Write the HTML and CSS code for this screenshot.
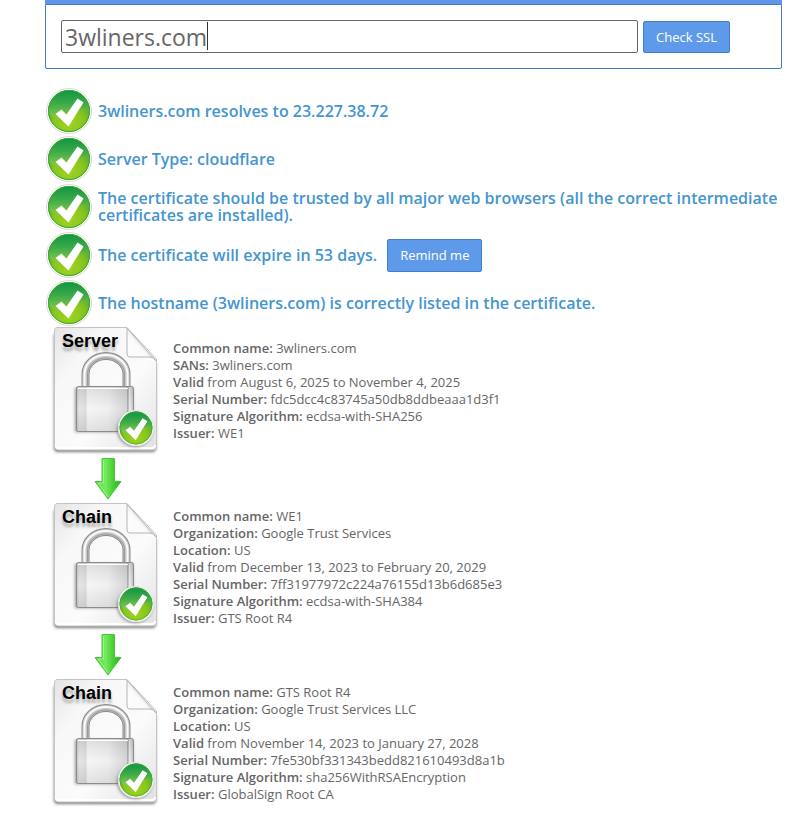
FILE: index.html
```html
<!DOCTYPE html>
<html lang="en">
<head>
    <meta charset="utf-8">
    <meta name="viewport" content="width=device-width, initial-scale=1">
    <title>SSL Checker</title>
    <link rel="stylesheet" href="styles.css">
</head>
<body>
    <!-- shared icons -->
    <svg class="sprite" width="0" height="0" aria-hidden="true">
        <defs>
            <linearGradient id="green-top" x1="0" y1="0" x2="0" y2="1">
                <stop offset="0" stop-color="#0f9444"/>
                <stop offset="0.5" stop-color="#3fab48"/>
                <stop offset="1" stop-color="#8cc94c"/>
            </linearGradient>
            <radialGradient id="green-glow" cx="0.5" cy="0.8" r="0.6">
                <stop offset="0" stop-color="#a0d420"/>
                <stop offset="0.6" stop-color="#86c61e"/>
                <stop offset="1" stop-color="#58ae2c"/>
            </radialGradient>
            <linearGradient id="paper" x1="0" y1="0" x2="1" y2="1">
                <stop offset="0" stop-color="#e4e4e4"/>
                <stop offset="0.25" stop-color="#f8f8f8"/>
                <stop offset="0.6" stop-color="#fbfbfb"/>
                <stop offset="1" stop-color="#e2e2e2"/>
            </linearGradient>
            <linearGradient id="fold" x1="0" y1="1" x2="0.6" y2="0.4">
                <stop offset="0" stop-color="#ffffff"/>
                <stop offset="0.7" stop-color="#fafafa"/>
                <stop offset="1" stop-color="#d0d0d0"/>
            </linearGradient>
            <linearGradient id="steel" x1="0" y1="0" x2="1" y2="0">
                <stop offset="0" stop-color="#bcbcbc"/>
                <stop offset="0.05" stop-color="#dedede"/>
                <stop offset="0.17" stop-color="#d6d6d6"/>
                <stop offset="0.19" stop-color="#f4f4f4"/>
                <stop offset="0.55" stop-color="#ececec"/>
                <stop offset="0.88" stop-color="#cccccc"/>
                <stop offset="0.9" stop-color="#8a8a8a"/>
                <stop offset="0.93" stop-color="#e8e8e8"/>
                <stop offset="1" stop-color="#b0b0b0"/>
            </linearGradient>
            <linearGradient id="shade" x1="0" y1="0" x2="0" y2="1">
                <stop offset="0" stop-color="#999999" stop-opacity="0.25"/>
                <stop offset="0.5" stop-color="#ffffff" stop-opacity="0.2"/>
                <stop offset="1" stop-color="#999999" stop-opacity="0.2"/>
            </linearGradient>
            <linearGradient id="arrow-fill" x1="0" y1="0" x2="1" y2="0">
                <stop offset="0.1" stop-color="#5fdc4c"/>
                <stop offset="0.4" stop-color="#74ea5e"/>
                <stop offset="0.9" stop-color="#2cbc1c"/>
            </linearGradient>
            <filter id="soft" x="-20%" y="-20%" width="140%" height="140%">
                <feGaussianBlur stdDeviation="1.5"/>
            </filter>
        </defs>
        <symbol id="check" viewBox="0 0 46 46">
            <circle cx="23" cy="23" r="22.5" fill="#fff" stroke="#dadada"/>
            <circle cx="23" cy="23" r="21" fill="url(#green-glow)"/>
            <path d="M2 23a21 21 0 0 1 42 0c-2-2-5-3-8-2-8 2-14 9-23 9-5 0-9-3-11-7z" fill="url(#green-top)"/>
            <circle cx="23" cy="23" r="20.5" fill="none" stroke="#3aa838"/>
            <path d="M9.500 26l6-4.500 5 5L31.500 10.500l6 4-15 24z" fill="#fff"/>
        </symbol>
        <symbol id="document" viewBox="0 0 112 128">
            <path d="M8 6h69l30 32v83a4 4 0 0 1-4 4H9a4 4 0 0 1-4-4V8z" fill="#444" opacity="0.7" filter="url(#soft)"/>
            <path d="M8 .5h70L107.500 32v87a4 4 0 0 1-4 4H9.500a4 4 0 0 1-4-4V3A3 3 0 0 1 8 .5z" fill="url(#paper)" stroke="#c4c4c4"/>
            <path d="M7 118q0 3 3 3h93q3 0 3-3" fill="none" stroke="#fff" stroke-width="2"/>
            <path d="M78 1v26q0 3 3 3h20q4 0 6 4z" fill="url(#fold)" stroke="#b4b4b4"/>
            <!-- padlock -->
            <path d="M26 61h58v44H26z" fill="#333" opacity="0.5" filter="url(#soft)"/>
            <path d="M36.500 60V47a20.500 18 0 0 1 41 0v13" fill="none" stroke="#8a8a8a" stroke-width="8"/>
            <path d="M36.500 60V47a20.500 18 0 0 1 41 0v13" fill="none" stroke="#c8c8c8" stroke-width="6"/>
            <path d="M35.500 60V47a21.500 19 0 0 1 43 0v13" fill="none" stroke="#fafafa" stroke-width="2"/>
            <path d="M38.500 60V47a18.500 16 0 0 1 37 0v13" fill="none" stroke="#9a9a9a"/>
            <rect x="27.500" y="59.500" width="57" height="45" rx="2" fill="url(#steel)" stroke="#8c8c8c"/>
            <rect x="28" y="60" width="56" height="44" rx="2" fill="url(#shade)"/>
            <path d="M29 61.500h50" stroke="#fff"/>
            <ellipse cx="86" cy="103" rx="18" ry="17" fill="#444" opacity="0.5" filter="url(#soft)"/>
            <circle cx="87" cy="101" r="18" fill="#fff"/>
            <use href="#check" x="69" y="83" width="36" height="36"/>
        </symbol>
        <symbol id="arrow" viewBox="0 0 28 42">
            <path d="M8 .5h12.500v23h6.500L14 41 1 23.500h7z" fill="url(#arrow-fill)" stroke="#4cc43a"/>
            <path d="M9.500 2v23H4l10 13.500" fill="none" stroke="#a4f890" opacity="0.8"/>
        </symbol>
    </svg>

    <main class="checker">
        <form class="panel" onsubmit="return false">
            <div class="field">
                <input class="host" type="text" name="hostname" value="3wliners.com" aria-label="Server Hostname">
                <span class="caret"></span>
            </div>
            <button class="btn" type="submit">Check SSL</button>
        </form>

        <ul class="results">
            <li><svg class="check"><use href="#check"/></svg><span>3wliners.com resolves to 23.227.38.72</span></li>
            <li><svg class="check"><use href="#check"/></svg><span>Server Type: cloudflare</span></li>
            <li><svg class="check"><use href="#check"/></svg><span>The certificate should be trusted by all major web browsers (all the correct intermediate certificates are installed).</span></li>
            <li><svg class="check"><use href="#check"/></svg><span>The certificate will expire in 53 days.</span><button class="btn remind" type="button">Remind me</button></li>
            <li><svg class="check"><use href="#check"/></svg><span>The hostname (3wliners.com) is correctly listed in the certificate.</span></li>
        </ul>

        <section class="cert">
            <div class="cert-icon">
                <svg><use href="#document"/></svg>
                <span class="cert-label">Server</span>
            </div>
            <p>
                <b>Common name:</b> 3wliners.com<br>
                <b>SANs:</b> 3wliners.com<br>
                <b>Valid</b> from August 6, 2025 to November 4, 2025<br>
                <b>Serial Number:</b> fdc5dcc4c83745a50db8ddbeaaa1d3f1<br>
                <b>Signature Algorithm:</b> ecdsa-with-SHA256<br>
                <b>Issuer:</b> WE1
            </p>
        </section>
        <div class="arrow"><svg><use href="#arrow"/></svg></div>
        <section class="cert">
            <div class="cert-icon">
                <svg><use href="#document"/></svg>
                <span class="cert-label">Chain</span>
            </div>
            <p>
                <b>Common name:</b> WE1<br>
                <b>Organization:</b> Google Trust Services<br>
                <b>Location:</b> US<br>
                <b>Valid</b> from December 13, 2023 to February 20, 2029<br>
                <b>Serial Number:</b> 7ff31977972c224a76155d13b6d685e3<br>
                <b>Signature Algorithm:</b> ecdsa-with-SHA384<br>
                <b>Issuer:</b> GTS Root R4
            </p>
        </section>
        <div class="arrow"><svg><use href="#arrow"/></svg></div>
        <section class="cert">
            <div class="cert-icon">
                <svg><use href="#document"/></svg>
                <span class="cert-label">Chain</span>
            </div>
            <p>
                <b>Common name:</b> GTS Root R4<br>
                <b>Organization:</b> Google Trust Services LLC<br>
                <b>Location:</b> US<br>
                <b>Valid</b> from November 14, 2023 to January 27, 2028<br>
                <b>Serial Number:</b> 7fe530bf331343bedd821610493d8a1b<br>
                <b>Signature Algorithm:</b> sha256WithRSAEncryption<br>
                <b>Issuer:</b> GlobalSign Root CA
            </p>
        </section>
    </main>
</body>
</html>
```

FILE: styles.css
```css
* { box-sizing: border-box; }
body { margin: 0; background-color: #fff; color: #666; font-family: "Open Sans", Arial, sans-serif; font-size: 13px; line-height: 17px; }
.sprite { position: absolute; }
.checker { margin: 0 10px 20px 45px; border-top: 4px solid #5f97e8; }
.panel { display: flex; align-items: flex-end; gap: 5px; padding: 15px 51px 15px 15px; border: 1px solid #3f7fcc; border-radius: 0 0 2px 2px; }
.field { position: relative; flex: 1; min-width: 0; }
.host { display: block; width: 100%; height: 33px; padding: 0 3px; border: 1px solid #666; border-radius: 2px; outline: none; color: #666; font-family: inherit; font-size: 23px; }
.caret { position: absolute; top: 2px; left: 146px; width: 1px; height: 28px; background-color: #333; }
.btn { height: 32px; padding: 0 12px; background-color: #5f9aea; color: #fff; border: 1px solid #3f7fcc; border-radius: 2px; font-family: inherit; font-size: 13px; cursor: pointer; }
.btn:hover { background-color: #3f7fcc; }
.results { list-style: none; margin: 18px 0 0; padding: 0; color: #4595cf; font-size: 16px; font-weight: 600; }
.results li { display: flex; align-items: center; min-height: 48px; padding-left: 1px; }
.check { flex: none; width: 46px; height: 46px; margin-right: 6px; }
.remind { height: 33px; margin-left: 10px; }
.cert { display: flex; align-items: center; gap: 12px; }
.cert p { margin: 0; }
.cert b { font-weight: 600; }
.cert-icon { position: relative; flex: none; width: 112px; height: 128px; margin-left: 4px; }
.cert-icon svg { display: block; width: 100%; height: 100%; }
.cert-label { position: absolute; top: 4px; left: 13px; color: #000; font: bold 18px/20px "Liberation Sans", Arial, sans-serif; text-shadow: 0 4px 3px #aaa; }
.arrow { height: 48px; padding: 3px 0 0 49px; }
.arrow svg { display: block; width: 28px; height: 42px; }
```
